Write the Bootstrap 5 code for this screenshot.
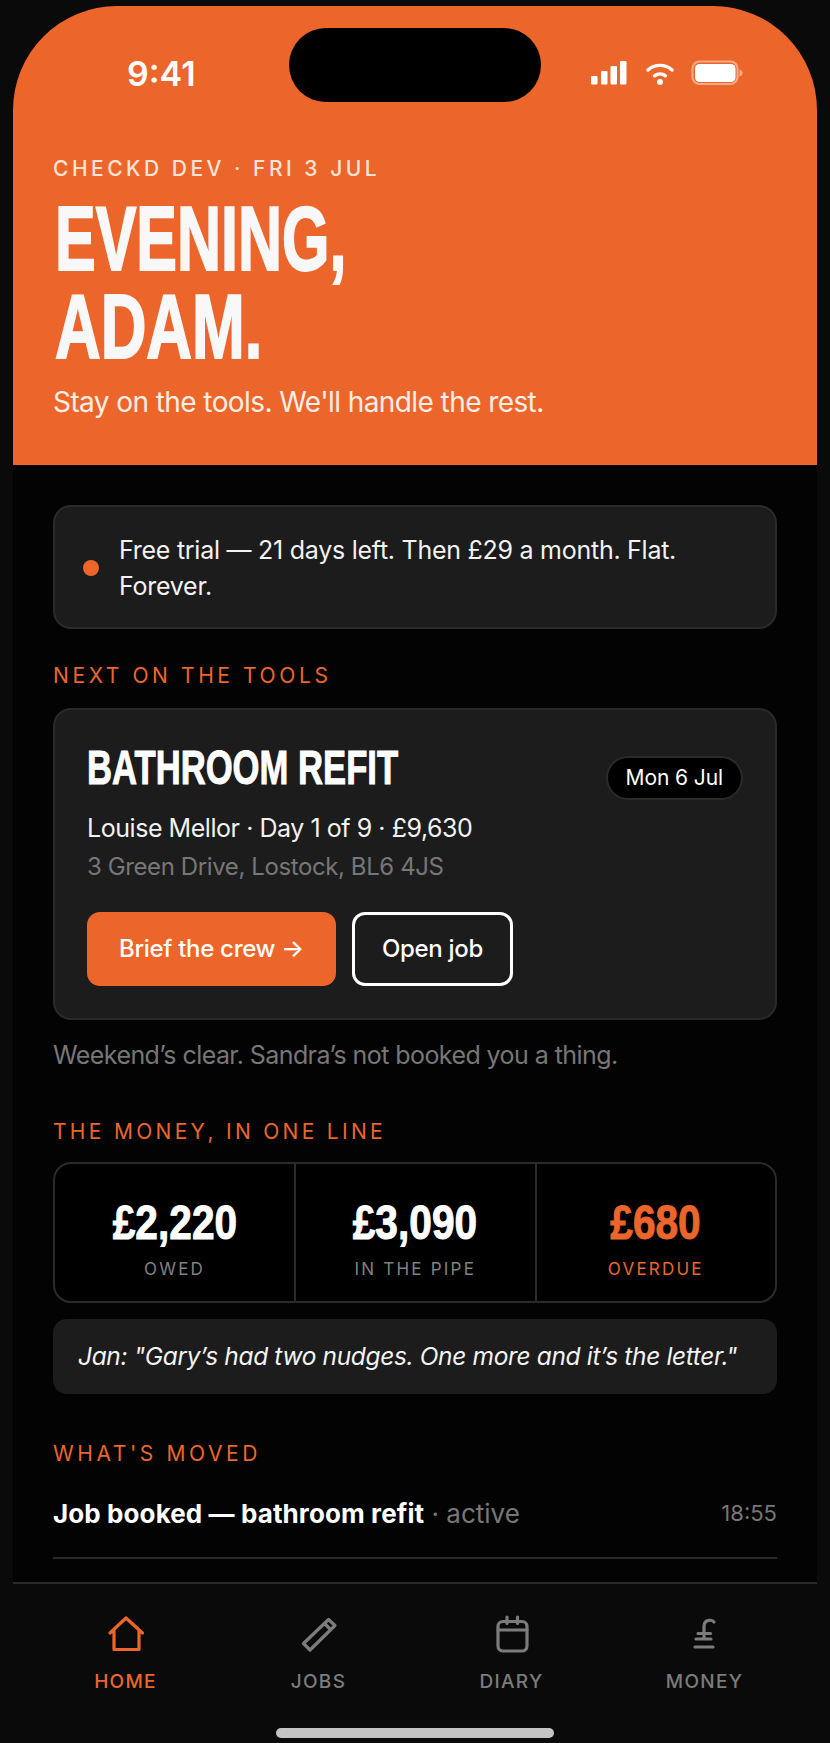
<!DOCTYPE html>
<html lang="en">
  <head>
    <meta charset="UTF-8" />
    <meta name="viewport" content="width=device-width, initial-scale=1.0" />
    <title>Checkd Home</title>
    <link href="https://cdn.jsdelivr.net/npm/bootstrap@5.3.0/dist/css/bootstrap.min.css" rel="stylesheet" />
    <style>
      html, body {
        height: 100%;
      }
      body {
        background: #0a0a0a;
        font-family: Inter, "Noto Sans", sans-serif;
        color: #fff;
        overflow: hidden;
      }
      .phone {
        width: 804px;
        height: 1737px;
        margin: 6px 0 0 13px;
        background: #030303;
        border-radius: 104px 104px 0 0;
        overflow: hidden;
        position: relative;
      }
      .hero {
        background: #ec662b;
        height: 459px;
        padding: 0 40px;
      }
      .status-row {
        height: 149px;
        padding: 40px 0 0 74px;
        align-items: flex-start;
      }
      .clock {
        font-weight: 600;
        font-size: 34px;
        line-height: 56px;
      }
      .island {
        position: absolute;
        left: 276px;
        top: 22px;
        width: 252px;
        height: 74px;
        background: #000;
        border-radius: 37px;
      }
      .status-icons {
        position: absolute;
        left: 576px;
        top: 52px;
      }
      .eyebrow {
        font-size: 21px;
        font-weight: 500;
        letter-spacing: 3.5px;
        line-height: 28px;
        color: #fbe3d7;
      }
      /* no condensed face installed, so the bold is squeezed and thickened */
      .display {
        font-family: "Liberation Sans", sans-serif;
        font-weight: 700;
        display: inline-block;
        white-space: nowrap;
        -webkit-text-stroke: 1px currentColor;
      }
      .hero-title {
        font-size: 91px;
        line-height: 88px;
        margin: 12px 0 0 2px;
        color: #f8f8f8;
      }
      .hero-title .display {
        display: block;
        transform: scaleX(.67);
        transform-origin: left center;
        -webkit-text-stroke-width: 2px;
      }
      .hero-title .line-two {
        transform: scaleX(.695);
      }
      .hero-sub {
        font-size: 28px;
        letter-spacing: -.58px;
        line-height: 36px;
        margin-top: 13px;
        color: #fdeee6;
      }
      .page-body {
        padding: 40px 40px 0;
      }
      .notice {
        background: #1c1c1c;
        border: 2px solid #2a2a2a;
        border-radius: 18px;
        height: 124px;
        padding: 2px 28px 0;
        font-size: 25px;
        letter-spacing: -.26px;
        line-height: 36px;
        color: #f2f2f2;
      }
      .notice-dot {
        width: 16px;
        height: 16px;
        background: #ec662b;
        border-radius: 50%;
        flex: none;
        margin-right: 20px;
      }
      .section-label {
        font-size: 21px;
        font-weight: 400;
        letter-spacing: 3.6px;
        line-height: 28px;
        color: #ec662b;
      }
      .label-next {
        margin: 33px 0 18px;
      }
      .label-money {
        margin: 45px 0 16px;
        letter-spacing: 3.3px;
      }
      .label-moved {
        margin-top: 46px;
      }
      .job-card {
        background: #1c1c1c;
        border: 2px solid #2a2a2a;
        border-radius: 18px;
        color: #fff;
      }
      .job-card .card-body {
        padding: 32px 32px 32px;
      }
      .job-title {
        font-size: 49px;
        line-height: 50px;
        margin: 0;
      }
      .job-title .display {
        transform: scaleX(.707);
        transform-origin: left center;
      }
      .date-pill {
        background: #000;
        border: 2px solid #2a2a2a;
        height: 44px;
        padding: 0 18px;
        font-size: 21px;
        letter-spacing: -.1px;
        line-height: 40px;
        margin-top: 14px;
      }
      .job-who {
        font-size: 25px;
        letter-spacing: -.45px;
        line-height: 36px;
        margin-top: 10px;
        color: #f2f2f2;
      }
      .job-where {
        font-size: 24px;
        letter-spacing: -.4px;
        line-height: 36px;
        margin-top: 3px;
        color: #777;
      }
      .job-actions {
        margin-top: 27px;
      }
      .btn-brief, .btn-open {
        height: 74px;
        font-size: 24px;
        font-weight: 500;
        letter-spacing: -.3px;
        border-radius: 13px;
        color: #fff;
        display: flex;
        align-items: center;
      }
      .btn-brief {
        background: #ec662b;
        border: 0;
        padding: 0 32px;
      }
      .btn-open {
        background: transparent;
        border: 3px solid #fff;
        padding: 0 27px;
      }
      .muted-note {
        font-size: 25px;
        letter-spacing: -.57px;
        line-height: 36px;
        margin-top: 17px;
        color: #777;
      }
      .stats {
        border: 2px solid #2a2a2a;
        border-radius: 18px;
        height: 141px;
        background: #000;
      }
      .stat-cell {
        padding-top: 13px;
      }
      .stat-cell + .stat-cell {
        border-left: 2px solid #2a2a2a;
      }
      .stat-value {
        font-size: 49px;
        line-height: 50px;
        transform: scaleX(.83);
      }
      .stat-label {
        font-size: 17px;
        letter-spacing: 2.2px;
        line-height: 24px;
        color: #808080;
        margin-top: 10px;
      }
      .text-orange {
        color: #ec662b !important;
      }
      .quote {
        background: #1c1c1c;
        border-radius: 14px;
        height: 75px;
        margin-top: 16px;
        padding-left: 25px;
        font-size: 24.5px;
        letter-spacing: -.35px;
        font-style: italic;
        color: #f2f2f2;
      }
      .moved-title {
        font-size: 26px;
        font-weight: 700;
        letter-spacing: .1px;
      }
      .moved-state {
        font-size: 26px;
        color: #777;
      }
      .moved-time {
        font-size: 22px;
        color: #777;
      }
      .moved-row {
        height: 91px;
        padding-top: 2px;
        border-bottom: 2px solid #2a2a2a;
      }
      .tabbar {
        position: absolute;
        left: 0;
        right: 0;
        bottom: 0;
        height: 161px;
        background: #0a0a0a;
        border-top: 2px solid #2a2a2a;
        padding: 31px 16px 0;
      }
      .tab-item {
        width: 193px;
        color: #7c7c7c;
        font-size: 19px;
        font-weight: 500;
        letter-spacing: 1.3px;
        line-height: 26px;
      }
      .tab-item.is-on {
        color: #ec662b;
      }
      .tab-item svg {
        display: block;
        margin-bottom: 14px;
      }
      .home-bar {
        position: absolute;
        left: 263px;
        bottom: 5px;
        width: 278px;
        height: 10px;
        background: #c4c4c4;
        border-radius: 5px;
      }
    </style>
  </head>
  <body>
    <div class="phone">
      <header class="hero">
        <div class="status-row d-flex">
          <span class="clock">9:41</span>
        </div>
        <div class="island"></div>
        <svg class="status-icons" width="170" height="36" viewBox="0 0 170 36">
          <g fill="#fff">
            <rect x="2" y="18" width="6.5" height="8.5" rx="1" />
            <rect x="12" y="13" width="6.5" height="13.5" rx="1" />
            <rect x="21.5" y="8" width="6.5" height="18.5" rx="1" />
            <rect x="31" y="3" width="6.5" height="23.5" rx="1" />
            <circle cx="71" cy="24" r="3" />
          </g>
          <g fill="none" stroke="#fff" stroke-width="3.4" stroke-linecap="round">
            <path d="M59 12A18 18 0 0 1 83 12" />
            <path d="M65.5 17.8A9 9 0 0 1 76.5 17.8" />
          </g>
          <rect x="103.5" y="3.5" width="45" height="22.5" rx="7" fill="none" stroke="#fff" stroke-opacity=".45" stroke-width="2" />
          <rect x="106" y="6" width="40.5" height="18" rx="4.5" fill="#fff" />
          <path d="M150.5 11.5c2 .5 3 2 3 3.5s-1 3-3 3.5z" fill="#fff" fill-opacity=".5" />
        </svg>
        <div class="eyebrow">CHECKD DEV · FRI 3 JUL</div>
        <h1 class="hero-title"><span class="display">EVENING,</span><span class="display line-two">ADAM.</span></h1>
        <div class="hero-sub">Stay on the tools. We'll handle the rest.</div>
      </header>

      <main class="page-body">
        <div class="notice d-flex align-items-center">
          <span class="notice-dot"></span>
          <span>Free trial — 21 days left. Then £29 a month. Flat. Forever.</span>
        </div>

        <div class="section-label label-next">NEXT ON THE TOOLS</div>
        <div class="card job-card">
          <div class="card-body">
            <div class="d-flex justify-content-between align-items-start">
              <h2 class="job-title"><span class="display">BATHROOM REFIT</span></h2>
              <span class="date-pill rounded-pill">Mon 6 Jul</span>
            </div>
            <div class="job-who">Louise Mellor · Day 1 of 9 · £9,630</div>
            <div class="job-where">3 Green Drive, Lostock, BL6 4JS</div>
            <div class="job-actions d-flex gap-3">
              <button type="button" class="btn btn-brief">Brief the crew →</button>
              <button type="button" class="btn btn-open">Open job</button>
            </div>
          </div>
        </div>
        <div class="muted-note">Weekend’s clear. Sandra’s not booked you a thing.</div>

        <div class="section-label label-money">THE MONEY, IN ONE LINE</div>
        <div class="stats d-flex">
          <div class="stat-cell flex-fill w-100 d-flex flex-column align-items-center justify-content-center">
            <div class="stat-value display">£2,220</div>
            <div class="stat-label">OWED</div>
          </div>
          <div class="stat-cell flex-fill w-100 d-flex flex-column align-items-center justify-content-center">
            <div class="stat-value display">£3,090</div>
            <div class="stat-label">IN THE PIPE</div>
          </div>
          <div class="stat-cell flex-fill w-100 d-flex flex-column align-items-center justify-content-center">
            <div class="stat-value display text-orange">£680</div>
            <div class="stat-label text-orange">OVERDUE</div>
          </div>
        </div>
        <div class="quote d-flex align-items-center">Jan: "Gary’s had two nudges. One more and it’s the letter."</div>

        <div class="section-label label-moved">WHAT'S MOVED</div>
        <div class="moved-row d-flex justify-content-between align-items-center">
          <div><span class="moved-title">Job booked — bathroom refit</span><span class="moved-state"> · active</span></div>
          <span class="moved-time">18:55</span>
        </div>
      </main>

      <nav class="tabbar d-flex">
        <div class="tab-item is-on d-flex flex-column align-items-center">
          <svg width="40" height="40" viewBox="0 0 40 40" fill="none" stroke="currentColor" stroke-width="3.2" stroke-linejoin="round" stroke-linecap="round">
            <path d="M4 18 20 3l16.500 15M8 15v19.500h25V15" />
          </svg>
          <span>HOME</span>
        </div>
        <div class="tab-item d-flex flex-column align-items-center">
          <svg width="40" height="40" viewBox="0 0 40 40" fill="none" stroke="currentColor" stroke-width="3.2" stroke-linejoin="round">
            <path d="M4.500 28.500 29.500 4.500l6.500 6L11 35zM25.500 8.500l6 6" />
          </svg>
          <span>JOBS</span>
        </div>
        <div class="tab-item d-flex flex-column align-items-center">
          <svg width="40" height="40" viewBox="0 0 40 40" fill="none" stroke="currentColor" stroke-width="3.2" stroke-linecap="round">
            <rect x="6" y="6.500" width="29" height="29.500" rx="5" />
            <path d="M6 15h29M15 2v6.500M25.500 2v6.500" />
          </svg>
          <span>DIARY</span>
        </div>
        <div class="tab-item d-flex flex-column align-items-center">
          <svg width="40" height="40" viewBox="0 0 40 40" fill="none" stroke="currentColor" stroke-width="3.2" stroke-linecap="round">
            <path d="M29 7c-1.500-2.500-9.500-3-10 4v13M13 18.500h12.500M11 24h15M10 32h18" />
          </svg>
          <span>MONEY</span>
        </div>
        <div class="home-bar"></div>
      </nav>
    </div>
    <script src="https://cdn.jsdelivr.net/npm/bootstrap@5.3.0/dist/js/bootstrap.bundle.min.js"></script>
  </body>
</html>
